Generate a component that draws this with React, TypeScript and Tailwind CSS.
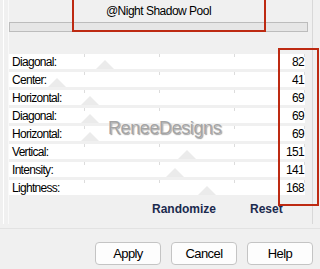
const rows = [
  { label: "Diagonal:", value: 82 },
  { label: "Center:", value: 41 },
  { label: "Horizontal:", value: 69 },
  { label: "Diagonal:", value: 69 },
  { label: "Horizontal:", value: 69 },
  { label: "Vertical:", value: 151 },
  { label: "Intensity:", value: 141 },
  { label: "Lightness:", value: 168 },
];

const narrow = "font-['Liberation_Sans_Narrow','Arial_Narrow','Liberation_Sans',sans-serif]";

const SliderRow = ({ label, value }: { label: string; value: number }) => {
  const x = (300 * value) / 255;
  return (
    <div className="relative mr-[3px] flex h-[15px] items-center justify-between bg-white pl-[3px] pr-[1px] text-[12px] leading-none tracking-[-0.7px] text-black">
      {/* tick marks */}
      <span className="absolute left-[75px] top-0 h-[3px] w-px bg-[#dcdcdc]" />
      <span className="absolute left-[150px] top-0 h-[3px] w-px bg-[#dcdcdc]" />
      <span className="absolute left-[225px] top-0 h-[3px] w-px bg-[#dcdcdc]" />
      <span className="absolute left-[295px] top-0 h-[3px] w-px bg-[#dcdcdc]" />
      {/* thumb */}
      <svg
        className="absolute bottom-0"
        style={{ left: x - 9 }}
        width="18"
        height="9"
        viewBox="0 0 18 9"
      >
        <polygon points="0,9 9,0 18,9" fill="#ebebeb" />
      </svg>
      <span className="relative">{label}</span>
      <span className="relative">{value}</span>
    </div>
  );
};

const DlgButton = ({ children }: { children: string }) => (
  <button className="flex h-[23px] w-[66px] items-center justify-center rounded-[4px] border border-[#c4c4c4] bg-[#fdfdfd] text-[13px] tracking-[-0.6px] text-black">
    {children}
  </button>
);

export default function App() {
  return (
    <div className={`relative h-[269px] w-[320px] overflow-hidden bg-[#f0f0f0] ${narrow}`}>
      <div className="ml-[3px] flex h-[224px] w-[310px] border-l border-white border-r border-r-[#d8d8d8]">
        <div className="ml-[4px] flex flex-1 flex-col border-l border-[#f9f9f9] pr-[4px]">
          <div className="flex h-[22px] items-center justify-center pb-[1px] text-[12px] tracking-[-0.5px] text-black">
            @Night Shadow Pool
          </div>
          <div className="h-[10px] border border-[#bcbcbc] bg-[#e6e6e6]" />
          <div className="h-[22px]" />
          <div className="flex flex-col gap-[3px]">
            {rows.map((r, i) => (
              <SliderRow key={i} label={r.label} value={r.value} />
            ))}
          </div>
          <div className="flex flex-1 items-end pb-[6px] font-['Liberation_Sans',sans-serif] text-[12px] font-bold text-[#1b2a4e]">
            <span className="ml-[143px]">Randomize</span>
            <span className="ml-[34px]">Reset</span>
          </div>
        </div>
      </div>
      <div className="mt-[4px] h-px bg-[#e2e2e2]" />
      <div className="mt-[13px] flex justify-end gap-[10px] pr-[7px]">
        <DlgButton>Apply</DlgButton>
        <DlgButton>Cancel</DlgButton>
        <DlgButton>Help</DlgButton>
      </div>

      {/* watermark */}
      <div className="absolute left-[108px] top-[115px] font-['Liberation_Sans',sans-serif] text-[18px] tracking-[-0.4px] text-[#a3a3a3] [text-shadow:0_0_2px_#ffffff,1px_1px_1px_#8a8a8a]">
        ReneeDesigns
      </div>

      {/* annotation boxes */}
      <div className="absolute left-[72px] top-[-2px] h-[34px] w-[194px] border-2 border-[#bd2a12]" />
      <div className="absolute left-[278px] top-[48px] h-[158px] w-[41px] border-2 border-[#bd2a12]" />
    </div>
  );
}
